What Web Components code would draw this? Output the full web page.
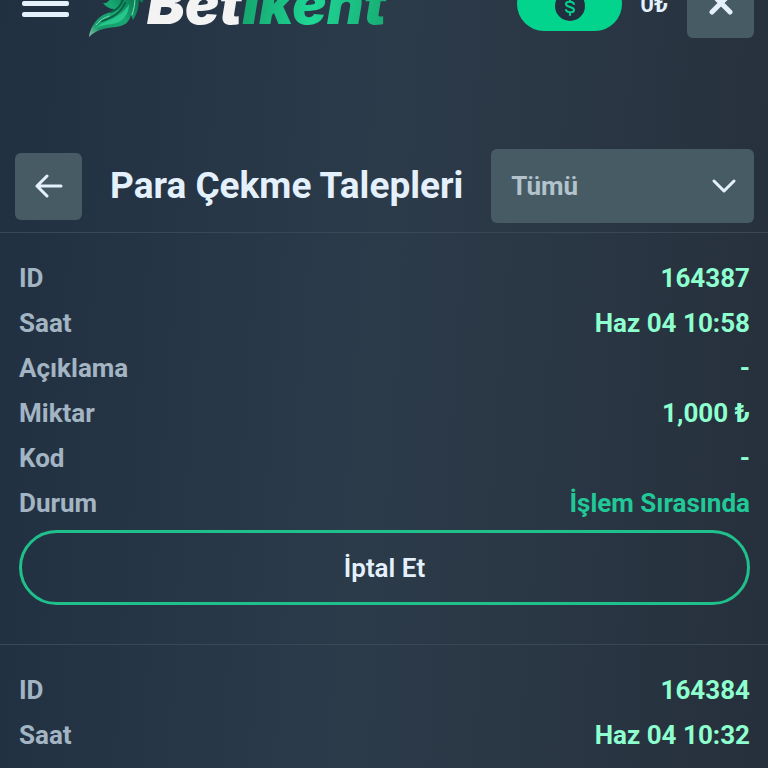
<!DOCTYPE html>
<html lang="tr">
<head>
  <meta charset="UTF-8">
  <meta name="viewport" content="width=device-width, initial-scale=1.0">
  <title>Betikent - Para Çekme Talepleri</title>
  <style>
    body {
      margin: 0;
      min-height: 100vh;
      overflow-x: hidden;
      font-family: Roboto, "Liberation Sans", sans-serif;
      font-size: 26px;
      color: #e4f1fd;
      background: linear-gradient(94deg, #213041 0%, #2c3b4a 48%, #293542 78%, #26303c 100%) fixed;
    }
  </style>
</head>
<body>
  <site-header balance="0₺"></site-header>
  <page-toolbar heading="Para Çekme Talepleri"></page-toolbar>
  <main>
    <request-card cancelable>
      <request-row label="ID">164387</request-row>
      <request-row label="Saat">Haz 04 10:58</request-row>
      <request-row label="Açıklama">-</request-row>
      <request-row label="Miktar">1,000 ₺</request-row>
      <request-row label="Kod">-</request-row>
      <request-row label="Durum" pending>İşlem Sırasında</request-row>
    </request-card>
    <request-card>
      <request-row label="ID">164384</request-row>
      <request-row label="Saat">Haz 04 10:32</request-row>
    </request-card>
  </main>

  <script>
    class BrandLogo extends HTMLElement {
      connectedCallback() {
        this.attachShadow({ mode: 'open' });
        this.shadowRoot.innerHTML = `
          <style>
            :host {
              display: block;
            }
            a {
              display: flex;
              align-items: center;
              color: #f3f3f3;
              text-decoration: none;
              font: italic 900 57px/60px Inter, "Liberation Sans", sans-serif;
            }
            svg {
              display: block;
              flex: none;
            }
            .accent {
              background: linear-gradient(100deg, #14a06a, #1fd795 50%, #17a972);
              background-clip: text;
              -webkit-background-clip: text;
              color: transparent;
            }
          </style>
          <a href="#" aria-label="Betikent">
            <svg width="58" height="66" viewBox="0 -30 58 66" aria-hidden="true">
              <defs>
                <linearGradient id="leaf" x1="0" y1="1" x2="1" y2="0">
                  <stop offset="0" stop-color="#8fc4ae"/>
                  <stop offset=".15" stop-color="#1a9a6a"/>
                  <stop offset=".45" stop-color="#17a873"/>
                  <stop offset=".7" stop-color="#0b7a52"/>
                  <stop offset="1" stop-color="#0a6c48"/>
                </linearGradient>
              </defs>
              <path fill="url(#leaf)" d="M0 36C1 28 5 21 11 16C15 13 19 12 22 11L25 8C21 8 17 6 14 2C20 3 24 -4 22 -14C36 -14 46 -22 54 -28C57 -14 57 -4 53 2L50 -1C50 6 48 13 44 19L42 14C40 22 35 25 27 26C15 27 7 29 0 36Z"/>
              <path fill="#27c68c" d="M6 28C14 18 31 20 40 3C40 14 33 22 23 23C15 24 10 25 6 28Z"/>
              <path fill="none" stroke="#076044" stroke-width="2" stroke-linecap="round" d="M13 20C23 17 32 12 36 2M22 11C28 9 32 5 34 -2"/>
              <path fill="none" stroke="#7ee3bd" stroke-width="1" stroke-linecap="round" d="M43 14C45 8 46 3 46 -4M7 24C11 19 15 17 20 15"/>
            </svg>
            <span>Bet<span class="accent">ikent</span></span>
          </a>
        `;
      }
    }

    class SiteHeader extends HTMLElement {
      connectedCallback() {
        this.attachShadow({ mode: 'open' });
        this.shadowRoot.innerHTML = `
          <style>
            /* header is partly scrolled off the top of the page */
            :host {
              display: block;
              margin-top: -30px;
            }
            header {
              display: flex;
              align-items: center;
              height: 68px;
              padding: 0 14px 0 22px;
            }
            button {
              display: flex;
              align-items: center;
              justify-content: center;
              padding: 0;
              border: 0;
              background: none;
              color: inherit;
              cursor: pointer;
            }
            svg {
              display: block;
            }
            brand-logo {
              margin-left: 20px;
            }
            .wallet {
              width: 105px;
              height: 54px;
              margin-left: auto;
              border-radius: 27px;
              background: #03d48d;
            }
            .balance {
              margin: 0 19px 0 18px;
              font-size: 24px;
              font-weight: 600;
            }
            .close {
              width: 67px;
              height: 67px;
              border-radius: 6px;
              background: #475b65;
            }
          </style>
          <header>
            <button type="button" aria-label="Menü">
              <svg width="47" height="29" viewBox="0 0 47 29" fill="#e4f1fd">
                <rect width="47" height="5" rx="2"/>
                <rect y="11" width="47" height="5" rx="2"/>
                <rect y="22" width="47" height="5" rx="2"/>
              </svg>
            </button>
            <brand-logo></brand-logo>
            <button class="wallet" type="button" aria-label="Para yatır">
              <svg width="30" height="34" viewBox="0 -3 30 34">
                <circle cx="15" cy="16" r="15" fill="#21303f"/>
                <path fill="none" stroke="#03d48d" stroke-width="2" stroke-linecap="round" d="M19 14C18 11 11 11 11 14C11 18 19 16 19 20C19 23 12 23 11 20M15 9V11M15 23V25"/>
              </svg>
            </button>
            <span class="balance">${this.getAttribute('balance')}</span>
            <button class="close" type="button" aria-label="Kapat">
              <svg width="24" height="24" viewBox="0 0 24 24" fill="none" stroke="#e4f1fd" stroke-width="5" stroke-linecap="round">
                <path d="M3 2L21 20M21 2L3 20"/>
              </svg>
            </button>
          </header>
        `;
      }
    }

    class PageToolbar extends HTMLElement {
      connectedCallback() {
        this.attachShadow({ mode: 'open' });
        this.shadowRoot.innerHTML = `
          <style>
            :host {
              display: block;
              margin-top: 111px;
            }
            .toolbar {
              display: flex;
              align-items: center;
              gap: 28px;
              padding: 0 14px 9px 15px;
            }
            .back {
              display: flex;
              align-items: center;
              justify-content: center;
              flex: none;
              width: 67px;
              height: 67px;
              padding: 0;
              border: 0;
              border-radius: 6px;
              background: #475b65;
              cursor: pointer;
            }
            h1 {
              margin: 0;
              font-size: 37px;
              font-weight: 700;
              line-height: 44px;
              white-space: nowrap;
            }
            .filter {
              display: grid;
              flex: 1;
              align-items: center;
            }
            .filter > * {
              grid-area: 1 / 1;
            }
            select {
              appearance: none;
              width: 100%;
              height: 74px;
              padding: 0 60px 0 20px;
              border: 0;
              border-radius: 6px;
              background: #475b65;
              color: #b2c3cc;
              font: 700 26px Roboto, "Liberation Sans", sans-serif;
            }
            .filter svg {
              justify-self: end;
              margin-right: 18px;
              pointer-events: none;
            }
          </style>
          <div class="toolbar">
            <button class="back" type="button" aria-label="Geri">
              <svg width="28" height="24" viewBox="0 0 28 24" fill="none" stroke="#e4f1fd" stroke-width="3" stroke-linecap="round" stroke-linejoin="round">
                <path d="M26 12H2M12 2L2 12L12 22"/>
              </svg>
            </button>
            <h1>${this.getAttribute('heading')}</h1>
            <div class="filter">
              <select aria-label="Durum filtresi">
                <option>Tümü</option>
              </select>
              <svg width="24" height="14" viewBox="0 0 24 14" fill="none" stroke="#e4f1fd" stroke-width="3" stroke-linecap="round" stroke-linejoin="round">
                <path d="M2 2L12 12L22 2"/>
              </svg>
            </div>
          </div>
        `;
      }
    }

    class RequestRow extends HTMLElement {
      connectedCallback() {
        this.attachShadow({ mode: 'open' });
        this.shadowRoot.innerHTML = `
          <style>
            :host {
              display: flex;
              justify-content: space-between;
              font-weight: 700;
              line-height: 45px;
            }
            .label {
              color: #a3b4c3;
            }
            .value {
              color: #8effce;
            }
            :host([pending]) .value {
              color: #20c997;
            }
          </style>
          <span class="label">${this.getAttribute('label')}</span>
          <span class="value"><slot></slot></span>
        `;
      }
    }

    class RequestCard extends HTMLElement {
      connectedCallback() {
        const button = this.hasAttribute('cancelable') ? '<button type="button">İptal Et</button>' : '';
        this.attachShadow({ mode: 'open' });
        this.shadowRoot.innerHTML = `
          <style>
            :host {
              display: block;
              padding: 23px 18px 39px 19px;
              border-top: 1px solid #394854;
            }
            button {
              display: block;
              width: 100%;
              height: 75px;
              margin-top: 4px;
              border: 3px solid #1fc08c;
              border-radius: 38px;
              background: none;
              color: inherit;
              font: 600 26px Roboto, "Liberation Sans", sans-serif;
              cursor: pointer;
            }
          </style>
          <slot></slot>
          ${button}
        `;
      }
    }

    customElements.define('brand-logo', BrandLogo);
    customElements.define('site-header', SiteHeader);
    customElements.define('page-toolbar', PageToolbar);
    customElements.define('request-row', RequestRow);
    customElements.define('request-card', RequestCard);
  </script>
</body>
</html>
